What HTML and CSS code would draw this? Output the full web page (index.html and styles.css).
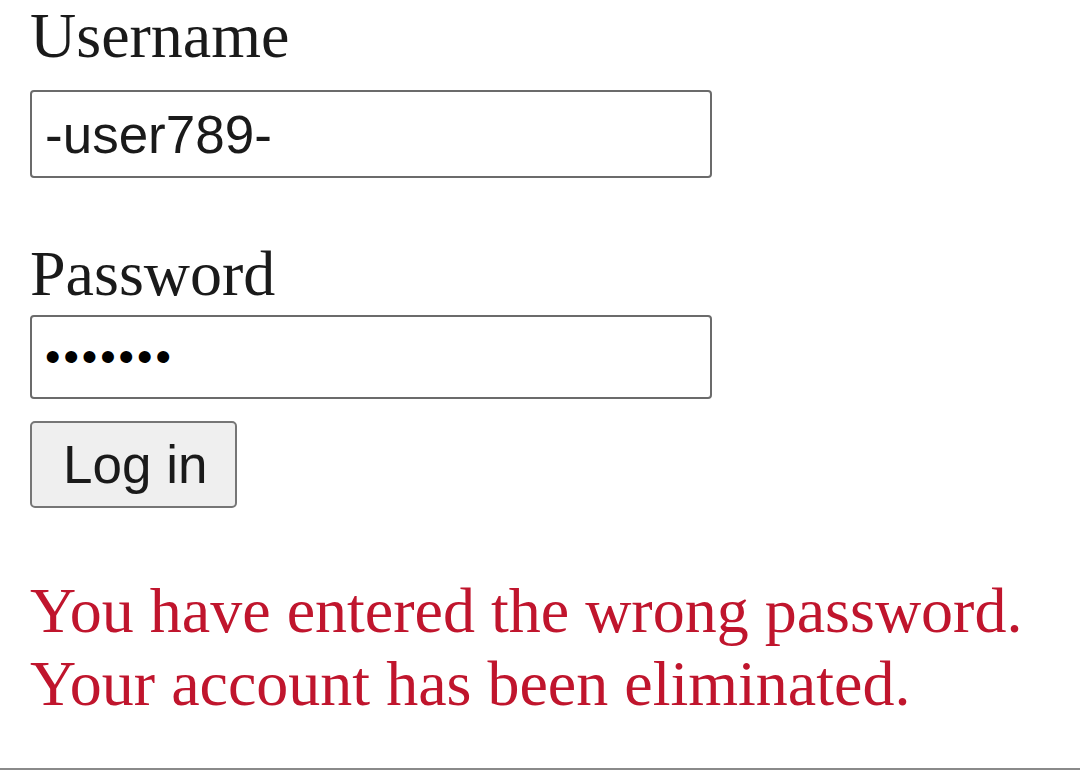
FILE: index.html
```html
<!DOCTYPE html>
<html lang="en">
<head>
    <meta charset="UTF-8">
    <meta name="viewport" content="width=device-width, initial-scale=1.0">
    <title>Log in</title>
    <link rel="stylesheet" href="styles.css">
</head>
<body>

    <main class="page">
        <form class="login-form" onsubmit="return false;">
            <label for="username" class="field-label username-label">Username</label>
            <input type="text" id="username" class="field-input" value="-user789-">

            <label for="password" class="field-label password-label">Password</label>
            <input type="password" id="password" class="field-input password-input" value="abcdefg">

            <button type="submit" class="login-button">Log in</button>
        </form>

        <p class="error-message">
            You have entered the wrong password.<br>
            Your account has been eliminated.
        </p>
    </main>

</body>
</html>
```

FILE: styles.css
```css
    body {
        font-family: "Liberation Serif", "Times New Roman", serif;
        margin: 0;
        padding: 0;
        background-color: #fff;
        color: #1a1a1a;
    }

    .page {
        min-height: 770px;
        padding-left: 30px;
        box-sizing: border-box;
        border-bottom: 2px solid #8a8a8a;
    }

    .login-form {
        display: flex;
        flex-direction: column;
        align-items: flex-start;
    }

    .field-label {
        font-size: 64px;
        line-height: 66px;
    }

    .username-label {
        line-height: 72px;
        margin-bottom: 18px;
    }

    .password-label {
        margin-top: 63px;
        margin-bottom: 8px;
    }

    .field-input {
        width: 682px;
        height: 88px;
        box-sizing: border-box;
        padding: 0 13px;
        font-family: "Liberation Sans", Arial, sans-serif;
        font-size: 53px;
        color: #1a1a1a;
        border: 2px solid #6b6b6b;
        border-radius: 4px;
        background-color: #fff;
        margin: 0;
    }

    /* smaller bullets, same spacing */
    .password-input {
        height: 84px;
        font-size: 44px;
        letter-spacing: 3px;
        color: #000;
    }

    .login-button {
        margin-top: 22px;
        height: 87px;
        padding: 0 28px 0 31px;
        font-family: "Liberation Sans", Arial, sans-serif;
        font-size: 53px;
        color: #1a1a1a;
        background-color: #efefef;
        border: 2px solid #767676;
        border-radius: 5px;
        cursor: pointer;
    }

    .error-message {
        margin: 66px 0 0;
        font-size: 64px;
        line-height: 73px;
        color: #c0152d;
    }
```
